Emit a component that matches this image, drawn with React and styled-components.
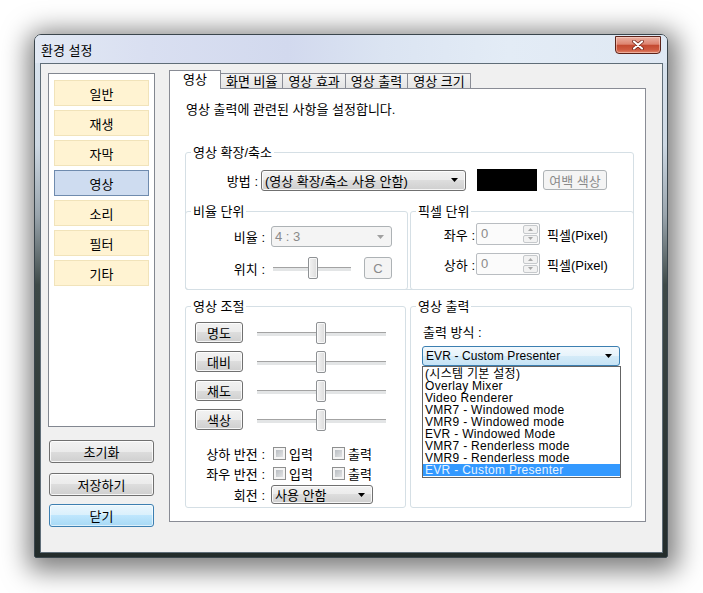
import React from 'react';
import styled, { createGlobalStyle, css } from 'styled-components';

const GlobalStyle = createGlobalStyle`
  * {
    margin: 0;
    padding: 0;
    box-sizing: border-box;
  }
  body {
    background: #fff;
    font-family: "Liberation Sans", "Noto Sans CJK KR", sans-serif;
    font-size: 13px;
    color: #000;
  }
`;

const winButton = css`
  border: 1px solid #707070;
  border-radius: 3px;
  background: linear-gradient(#f2f2f2 0%, #ebebeb 50%, #dddddd 50%, #cfcfcf 100%);
  box-shadow: inset 0 0 0 1px rgba(255, 255, 255, 0.8);
`;

const winDisabled = css`
  border: 1px solid #adb2b5;
  border-radius: 3px;
  background: #f4f4f4;
  color: #8a8a8a;
`;

const winFocus = css`
  border: 1px solid #3c7fb1;
  border-radius: 3px;
  background: linear-gradient(#f3f9fd 0%, #e6f3fb 50%, #d4ebf8 50%, #c6e3f5 100%);
`;

const Desktop = styled.div`
  height: 593px;
  padding: 34px 0 0 34px;
  overflow: hidden;
`;

const Window = styled.div`
  width: 634px;
  height: 524px;
  display: flex;
  flex-direction: column;
  padding: 0 4px 4px 5px;
  border: 1px solid #3a454c;
  border-radius: 7px 7px 2px 2px;
  background: linear-gradient(180deg, #dce6f1 0, #cdd8e3 110px, #9aa5ad 180px, #3e4947 250px, #232c2b 100%);
  box-shadow: 2px 5px 26px 8px rgba(0, 0, 0, 0.5);
`;

const TitleBar = styled.div`
  height: 28px;
  display: flex;
  align-items: flex-start;
  justify-content: space-between;
  margin: 0 -4px 0 -5px;
  padding: 0 5px 0 6px;
  border-radius: 6px 6px 0 0;
  background: linear-gradient(90deg, #e2e9f4 0%, #d9dff1 18%, #d2d9ee 40%, #dbe4f2 55%, #e3ecf6 75%, #dfe8f3 100%);
`;

const Title = styled.span`
  margin-top: 8px;
  line-height: 16px;
`;

const CloseButton = styled.div`
  width: 46px;
  height: 18px;
  margin-top: 1px;
  margin-right: 1px;
  display: flex;
  align-items: center;
  justify-content: center;
  border: 1px solid #5b2219;
  border-radius: 0 0 4px 4px;
  background: linear-gradient(#eab0a2 0%, #de8470 45%, #c44a31 52%, #cf5a40 80%, #e0866c 100%);
  box-shadow: inset 0 0 0 1px rgba(255, 220, 210, 0.5);
`;

const Client = styled.div`
  flex: 1;
  display: flex;
  align-items: flex-start;
  padding: 6px 0 0 7px;
  background: #f0f0f0;
  border: 1px solid #5f6d78;
`;

const Sidebar = styled.div`
  width: 107px;
  margin-top: 3px;
  display: flex;
  flex-direction: column;
`;

const CategoryList = styled.div`
  height: 354px;
  display: flex;
  flex-direction: column;
  gap: 4px;
  padding: 6px 5px;
  background: #fff;
  border: 1px solid #828790;
`;

const Category = styled.div`
  height: 26px;
  display: flex;
  align-items: center;
  justify-content: center;
  border: 1px solid ${(p) => (p.$active ? '#6f8bae' : '#f1e3ba')};
  background: ${(p) => (p.$active ? '#cedcf0' : '#fff3d2')};
`;

const SideButton = styled.div`
  height: 23px;
  margin: ${(p) => p.$top}px 1px 0;
  display: flex;
  align-items: center;
  justify-content: center;
  ${(p) =>
    p.$default
      ? css`
          border: 1px solid #3c7fb1;
          border-radius: 3px;
          background: linear-gradient(#eaf6fd 0%, #d9f0fc 50%, #bee6fd 50%, #a7d9f5 100%);
          box-shadow: inset 0 0 0 1px rgba(255, 255, 255, 0.6);
        `
      : winButton}
`;

const TabControl = styled.div`
  width: 477px;
  height: 452px;
  margin-left: 14px;
  display: flex;
  flex-direction: column;
`;

const TabStrip = styled.div`
  display: flex;
  align-items: flex-end;
  margin-bottom: -1px;
  position: relative;
  z-index: 1;
`;

const Tab = styled.div`
  line-height: 15px;
  border: 1px solid #898c95;
  ${(p) =>
    p.$active
      ? css`
          height: 19px;
          padding: 1px 13px 0;
          border-bottom: none;
          background: #fff;
        `
      : css`
          height: 16px;
          padding: 0 5px;
          margin-left: -1px;
          background: linear-gradient(#f3f3f3, #e4e4e4);
        `}
  &:nth-child(2) {
    margin-left: 0;
    border-left: none;
  }
`;

const Panel = styled.div`
  flex: 1;
  padding: 13px 11px 0 15px;
  background: #fff;
  border: 1px solid #898c95;
`;

const Intro = styled.p`
  line-height: 16px;
  margin-left: 1px;
`;

const Group = styled.div`
  position: relative;
  width: ${(p) => (p.$w ? `${p.$w}px` : 'auto')};
  height: ${(p) => (p.$h ? `${p.$h}px` : 'auto')};
  margin-top: ${(p) => p.$top || 0}px;
  padding: ${(p) => p.$pad || '0'};
  border: 1px solid #d5dfe5;
  border-radius: 3px;
`;

const Legend = styled.span`
  position: absolute;
  top: -8px;
  left: 5px;
  padding: 0 2px;
  line-height: 15px;
  background: #fff;
`;

const Row = styled.div`
  display: flex;
  align-items: center;
  height: ${(p) => p.$h || 22}px;
  margin-top: ${(p) => p.$top || 0}px;
`;

const GroupRow = styled.div`
  display: flex;
  gap: ${(p) => p.$gap}px;
  margin: ${(p) => p.$margin};
`;

const FieldLabel = styled.span`
  flex: none;
  width: ${(p) => p.$w}px;
  margin-right: ${(p) => p.$mr}px;
  text-align: right;
  white-space: pre;
`;

const Combo = styled.div`
  position: relative;
  flex: none;
  width: ${(p) => p.$w}px;
  height: ${(p) => p.$h}px;
  display: flex;
  align-items: center;
  justify-content: space-between;
  padding: 0 7px 0 3px;
  white-space: pre;
  ${(p) => (p.$disabled ? winDisabled : p.$focus ? winFocus : winButton)}
  ${(p) =>
    p.$focus &&
    css`
      font-size: 12px;
      letter-spacing: 0.1px;
    `}
`;

const Arrow = styled.svg`
  flex: none;
`;

const Swatch = styled.div`
  width: 60px;
  height: 22px;
  margin-left: 11px;
  background: #000;
`;

const PushButton = styled.div`
  flex: none;
  width: ${(p) => p.$w}px;
  height: ${(p) => p.$h}px;
  margin-left: ${(p) => p.$ml || 0}px;
  display: flex;
  align-items: center;
  justify-content: center;
  ${(p) => (p.$disabled ? winDisabled : winButton)}
`;

const Slider = styled.div`
  position: relative;
  flex: none;
  width: ${(p) => p.$w}px;
  height: 22px;
  margin-left: ${(p) => p.$ml || 0}px;
  &::before {
    content: '';
    position: absolute;
    left: 2px;
    right: 2px;
    top: 10px;
    height: 3px;
    border-top: 1px solid #a3a3a3;
    border-bottom: 1px solid #fff;
    background: #e3e5e6;
  }
`;

const Thumb = styled.div`
  position: absolute;
  top: 0;
  width: 10px;
  height: 22px;
  border: 1px solid #8e9194;
  border-radius: 2px;
  background: linear-gradient(90deg, #f3f3f3, #dcdcdc);
  box-shadow: inset 0 0 0 1px rgba(255, 255, 255, 0.7);
`;

const Spin = styled.div`
  flex: none;
  width: 64px;
  height: 22px;
  display: flex;
  justify-content: space-between;
  padding: 1px 1px 1px 4px;
  border: 1px solid #b9bdc1;
  border-radius: 2px;
  background: #fbfbfb;
  color: #8a8a8a;
  line-height: 18px;
`;

const SpinButtons = styled.div`
  width: 15px;
  display: flex;
  flex-direction: column;
  gap: 1px;
`;

const SpinButton = styled.div`
  flex: 1;
  display: flex;
  align-items: center;
  justify-content: center;
  border: 1px solid #c6c9cc;
  border-radius: 2px;
  background: #f2f2f2;
`;

const Unit = styled.span`
  margin-left: 7px;
`;

const CheckItem = styled.label`
  display: flex;
  align-items: center;
  width: 59px;
`;

const CheckBox = styled.span`
  width: 13px;
  height: 13px;
  margin-right: 3px;
  border: 1px solid #8e8f8f;
  background: linear-gradient(135deg, #aeb3b9, #eceded);
  box-shadow: inset 0 0 0 2px #f4f4f4;
`;

const FieldCaption = styled.p`
  line-height: 16px;
  margin-left: 1px;
`;

const DropList = styled.div`
  position: absolute;
  top: 19px;
  left: -1px;
  width: 199px;
  padding: 1px 0;
  border: 1px solid #646464;
  background: #fff;
  color: #000;
  font-size: 12px;
  letter-spacing: 0.3px;
`;

const DropItem = styled.div`
  height: 12px;
  line-height: 12px;
  padding-left: 2px;
  white-space: pre;
  overflow: visible;
  ${(p) =>
    p.$selected &&
    css`
      background: #3399ff;
      color: #e6f3ff;
    `}
`;

const categories = ['일반', '재생', '자막', '영상', '소리', '필터', '기타'];
const tabs = ['영상', '화면 비율', '영상 효과', '영상 출력', '영상 크기'];
const adjustments = ['명도', '대비', '채도', '색상'];
const renderers = [
  '(시스템 기본 설정)',
  'Overlay Mixer',
  'Video Renderer',
  'VMR7 - Windowed mode',
  'VMR9 - Windowed mode',
  'EVR - Windowed Mode',
  'VMR7 - Renderless mode',
  'VMR9 - Renderless mode',
  'EVR - Custom Presenter',
];

const DownArrow = ({ color = '#000' }) => (
  <Arrow width="7" height="4" viewBox="0 0 7 4">
    <path d="M0 0H7L3.5 4Z" fill={color} />
  </Arrow>
);

const Checks = ({ label, top }) => (
  <Row $h={18} $top={top}>
    <FieldLabel $w={70} $mr={8}>{label}</FieldLabel>
    <CheckItem>
      <CheckBox />
      입력
    </CheckItem>
    <CheckItem>
      <CheckBox />
      출력
    </CheckItem>
  </Row>
);

const SpinRow = ({ label, top }) => (
  <Row $top={top}>
    <FieldLabel $w={64} $mr={1}>{label}</FieldLabel>
    <Spin>
      0
      <SpinButtons>
        <SpinButton>
          <svg width="5" height="3" viewBox="0 0 5 3">
            <path d="M0 3H5L2.5 0Z" fill="#a8a8a8" />
          </svg>
        </SpinButton>
        <SpinButton>
          <svg width="5" height="3" viewBox="0 0 5 3">
            <path d="M0 0H5L2.5 3Z" fill="#a8a8a8" />
          </svg>
        </SpinButton>
      </SpinButtons>
    </Spin>
    <Unit>픽셀(Pixel)</Unit>
  </Row>
);

const App = () => {
  return (
    <>
      <GlobalStyle />
      <Desktop>
        <Window>
          <TitleBar>
            <Title>환경 설정</Title>
            <CloseButton>
              <svg width="12" height="10" viewBox="0 0 12 10">
                <path d="M2 1.5L10 8.5M10 1.5L2 8.5" stroke="#6b1d10" strokeWidth="3.6" strokeLinecap="round" />
                <path d="M2 1.5L10 8.5M10 1.5L2 8.5" stroke="#fff" strokeWidth="2.2" strokeLinecap="round" />
              </svg>
            </CloseButton>
          </TitleBar>
          <Client>
            <Sidebar>
              <CategoryList>
                {categories.map((c) => (
                  <Category key={c} $active={c === '영상'}>
                    {c}
                  </Category>
                ))}
              </CategoryList>
              <SideButton $top={13}>초기화</SideButton>
              <SideButton $top={10}>저장하기</SideButton>
              <SideButton $top={8} $default>
                닫기
              </SideButton>
            </Sidebar>

            <TabControl>
              <TabStrip>
                {tabs.map((t, i) => (
                  <Tab key={t} $active={i === 0}>
                    {t}
                  </Tab>
                ))}
              </TabStrip>
              <Panel>
                <Intro>영상 출력에 관련된 사항을 설정합니다.</Intro>

                <Group $top={34}>
                  <Legend>영상 확장/축소</Legend>
                  <Row $top={16}>
                    <FieldLabel $w={72} $mr={3}>방법 :</FieldLabel>
                    <Combo $w={205} $h={21}>
                      (영상 확장/축소 사용 안함)
                      <DownArrow />
                    </Combo>
                    <Swatch />
                    <PushButton $w={64} $h={20} $ml={6} $disabled>
                      여백 색상
                    </PushButton>
                  </Row>
                  <GroupRow $gap={2} $margin="20px -1px -1px -1px">
                    <Group $w={223} $h={79}>
                      <Legend>비율 단위</Legend>
                      <Row $h={21} $top={14}>
                        <FieldLabel $w={79} $mr={6}>비율 :</FieldLabel>
                        <Combo $w={121} $h={21} $disabled>
                          4 : 3
                          <DownArrow color="#a0a0a0" />
                        </Combo>
                      </Row>
                      <Row $top={10}>
                        <FieldLabel $w={79} $mr={6}>위치 :</FieldLabel>
                        <Slider $w={82}>
                          <Thumb style={{ left: 37 }} />
                        </Slider>
                        <PushButton $w={28} $h={22} $ml={11} $disabled>
                          C
                        </PushButton>
                      </Row>
                    </Group>
                    <Group $w={224} $h={79}>
                      <Legend>픽셀 단위</Legend>
                      <SpinRow label="좌우 :" top={11} />
                      <SpinRow label="상하 :" top={8} />
                    </Group>
                  </GroupRow>
                </Group>

                <GroupRow $gap={4} $margin="16px 0 0 0">
                  <Group $w={221} $h={202} $pad="15px 0 0 9px">
                    <Legend>영상 조절</Legend>
                    {adjustments.map((a, i) => (
                      <Row key={a} $h={21} $top={i === 0 ? 0 : 8}>
                        <PushButton $w={48} $h={21}>
                          {a}
                        </PushButton>
                        <Slider $w={133} $ml={12}>
                          <Thumb style={{ left: 61 }} />
                        </Slider>
                      </Row>
                    ))}
                    <Checks label="상하 반전 :" top={14} />
                    <Checks label="좌우 반전 :" top={2} />
                    <Row $h={19} $top={3}>
                      <FieldLabel $w={70} $mr={6}>회전 :</FieldLabel>
                      <Combo $w={102} $h={19}>
                        사용 안함
                        <DownArrow />
                      </Combo>
                    </Row>
                  </Group>

                  <Group $w={222} $h={202} $pad="18px 0 0 11px">
                    <Legend>영상 출력</Legend>
                    <FieldCaption>출력 방식 :</FieldCaption>
                    <Row $h={20} $top={5}>
                      <Combo $w={198} $h={20} $focus>
                        EVR - Custom Presenter
                        <DownArrow />
                        <DropList>
                          {renderers.map((r, i) => (
                            <DropItem key={r} $selected={i === renderers.length - 1}>
                              {r}
                            </DropItem>
                          ))}
                        </DropList>
                      </Combo>
                    </Row>
                  </Group>
                </GroupRow>
              </Panel>
            </TabControl>
          </Client>
        </Window>
      </Desktop>
    </>
  );
};

export default App;
